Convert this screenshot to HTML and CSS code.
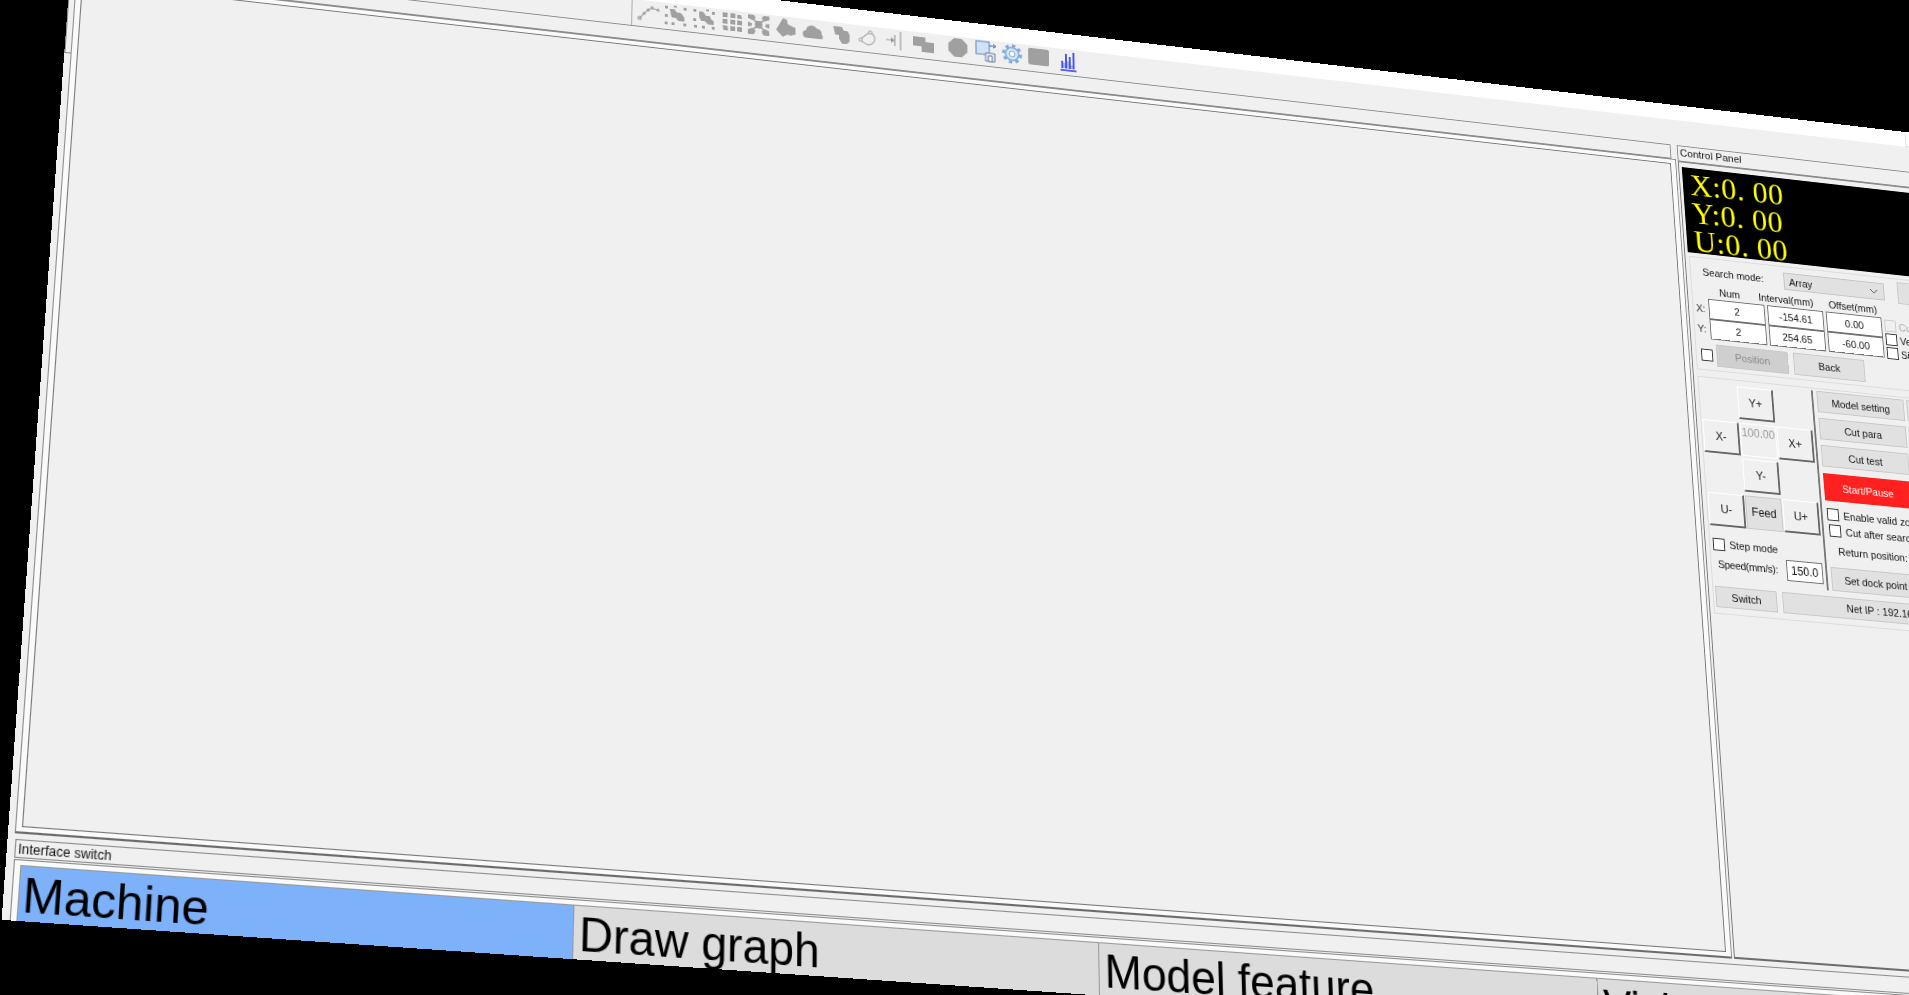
FILE: index.html
```html
<!DOCTYPE html>
<html>
<head>
    <title>Cutter Control</title>
    <meta name="viewport" content="width=device-width, initial-scale=1.0">
    <link rel="stylesheet" href="styles.css">
</head>
<body>
<div class="app">
    <div class="titlebar"><span class="win-btn"></span></div>

    <div class="toolbar">
        <div class="tools">
            <svg class="ico" viewBox="0 0 24 24"><path d="M3 20L9 13Q14 6 22 9" fill="none" stroke="#aaa" stroke-width="1.2"/><path d="M2 18h3v3H2zM7 13h2v2H7zM11 9h2v2h-2zM15 6h2v2h-2zM21 8h2v2h-2z" fill="none" stroke="#999"/></svg>
            <svg class="ico" viewBox="0 0 24 24"><path d="M6 6h5l2 3h4l2 2 2 3v4h-6l-3-3H8L7 11z" fill="#a0a0a0"/><path d="M1 3h3v3H1zM10 2h3v2h-3zM20 3h3v3h-3zM1 12h3v3H1zM1 20h3v3H1zM8 20h3v3H8zM20 20h3v3h-3z" fill="#a0a0a0"/></svg>
            <svg class="ico" viewBox="0 0 24 24"><path d="M7 5h4l3 4h4l1 3 3 2v4h-6l-3-3H9L7 11z" fill="#a0a0a0"/><path d="M1 3h3v3H1zM14 2h3v2h-3zM20 4h3v3h-3zM1 13h3v3H1zM2 20h3v3H2zM10 20h3v3h-3zM20 20h3v3h-3z" fill="#a0a0a0"/></svg>
            <svg class="ico" viewBox="0 0 24 24"><path d="M3 3h5v5H3zM11 3h5v5h-5zM18 4h4l1 4h-5zM3 10h5v5H3zM11 10h5v5h-5zM18 10h5v5h-5zM3 17h5l1 5H4zM11 17h5v5h-5zM18 17h5v5h-5z" fill="#a0a0a0"/></svg>
            <svg class="ico" viewBox="0 0 24 24"><path d="M1 2h6l2 3-3 3-5-2zM17 2h6v4l-5 2-3-3zM1 18l5-2 3 3-2 4H1zM15 19l3-3 5 2v5h-6zM9 8h6l1 4-1 4H9l-1-4zM1 10l4 1v3l-4 1zM23 10l-4 1v3l4 1z" fill="#a0a0a0"/><path d="M5 5l14 14M19 5L5 19" stroke="#a0a0a0" stroke-width="1.6"/></svg>
            <svg class="ico" viewBox="0 0 24 24"><path d="M9 2l4 1 1 5 8 3v7l-5 2-3-1-5 3-7-7z" fill="#a0a0a0"/></svg>
            <svg class="ico" viewBox="0 0 24 24"><path d="M5 20a4 4 0 0 1-1-8 6 6 0 0 1 11-3 5 5 0 0 1 5 6 3 3 0 0 1 0 5z" fill="#a0a0a0"/></svg>
            <svg class="ico" viewBox="0 0 24 24"><path d="M4 4h9l2 4h4l2 4v7l-3 3h-5l-3-5v-4H6z" fill="#a0a0a0"/></svg>
            <svg class="ico" viewBox="0 0 24 24"><path d="M4 15L14 6Q20 9 19 15Q15 22 9 19Q6 18 4 15z" fill="none" stroke="#aaa" stroke-width="1.2"/><path d="M3 14h3v3H3zM13 5h3v3h-3z" fill="#f0f0f0" stroke="#999" stroke-width=".8"/></svg>
            <svg class="ico" viewBox="0 0 24 24"><path d="M17 2v20" stroke="#999" stroke-width="1.2"/><path d="M11 6v12" stroke="#999" stroke-width="1.2"/><path d="M2 12h6" stroke="#999"/><path d="M7 9l4 3-4 3z" fill="#999"/></svg>
            <svg class="ico gap-s" viewBox="0 0 24 24"><path d="M1 5h13v5h9v11H10v-6H1z" fill="#a0a0a0"/></svg>
            <svg class="ico gap-b" viewBox="0 0 24 24"><path d="M8 2h8l6 6v8l-6 6H8l-6-6V8z" fill="#a0a0a0"/></svg>
            <svg class="ico" viewBox="0 0 24 24"><rect x="2" y="2" width="14" height="14" fill="#cfe2f7" stroke="#5f82b8"/><path d="M16 6h6M20 4l3 2-3 2" fill="none" stroke="#3f62a8"/><path d="M12 14h10v9H12z" fill="#dfe8f4" stroke="#6f7fa0"/><path d="M15 17h4v6h-4z" fill="#fff" stroke="#5f6f95"/></svg>
            <svg class="ico" viewBox="0 0 24 24"><circle cx="12" cy="12" r="7" fill="#d2e4f6" stroke="#7aa8d8" stroke-width="1.6"/><circle cx="12" cy="12" r="9" fill="none" stroke="#7aa8d8" stroke-width="3" stroke-dasharray="3.5 3.5"/><circle cx="12" cy="12" r="3" fill="#fff" stroke="#7aa8d8"/></svg>
            <svg class="ico" viewBox="0 0 24 24"><rect x="1" y="3" width="22" height="18" rx="2" fill="#a0a0a0"/></svg>
            <svg class="ico gap-a" viewBox="0 0 24 24"><path d="M4 23h17M6 21V13M10 21V5M14 21V8M18 21V3" fill="none" stroke="#1a2cf0" stroke-width="1.6"/><path d="M8 21v-6M12 21v-8M16 21v-4" stroke="#6a78f5"/></svg>
        </div>
    </div>

    <div class="workspace">
        <div class="edge-stub"></div>
        <div class="view-col">
            <div class="caption view-caption"></div>
            <div class="frame view-frame">
                <div class="canvas"></div>
            </div>
        </div>

        <div class="panel-col">
            <div class="caption panel-caption">Control Panel</div>
            <div class="frame panel-frame">
                <div class="led">X:0. 00<br>Y:0. 00<br>U:0. 00</div>

                <div class="group search">
                    <div class="search-top">
                        <span class="search-label">Search mode:</span>
                        <div class="select">Array
                            <svg class="chev" viewBox="0 0 10 6"><path d="M1 1l4 4 4-4" fill="none" stroke="#555"/></svg>
                        </div>
                        <button class="btn search-btn"></button>
                    </div>
                    <div class="search-mid">
                        <div class="coord">
                            <span></span><span class="head head-num">Num</span><span class="head head-int">Interval(mm)</span><span class="head head-off">Offset(mm)</span>
                            <span class="axis">X:</span><input class="cell" value="2"><input class="cell" value="-154.61"><input class="cell" value="0.00">
                            <span class="axis">Y:</span><input class="cell" value="2"><input class="cell" value="254.65"><input class="cell" value="-60.00">
                        </div>
                        <div class="side-checks">
                            <label class="check off"><input type="checkbox" class="chk" disabled>Cut</label>
                            <label class="check"><input type="checkbox" class="chk">Vertical</label>
                            <label class="check"><input type="checkbox" class="chk">Single</label>
                        </div>
                    </div>
                    <div class="search-bottom">
                        <input type="checkbox" class="chk">
                        <button class="btn pos-btn" disabled>Position</button>
                        <button class="btn back-btn">Back</button>
                    </div>
                </div>

                <div class="group manual">
                    <div class="manual-row">
                        <div class="jog-col">
                            <div class="dpad">
                                <span></span><button class="jog">Y+</button><span></span>
                                <button class="jog">X-</button><div class="jog-step">100.00</div><button class="jog">X+</button>
                                <span></span><button class="jog">Y-</button><span></span>
                                <button class="jog">U-</button><button class="btn feed">Feed</button><button class="jog">U+</button>
                            </div>
                            <label class="check step"><input type="checkbox" class="chk">Step mode</label>
                            <div class="speed"><span class="speed-label">Speed(mm/s):</span><input class="cell speed-input" value="150.0"></div>
                        </div>
                        <div class="divider"></div>
                        <div class="action-col">
                            <div class="action-row"><button class="btn act">Model setting</button><button class="btn act"></button></div>
                            <div class="action-row"><button class="btn act">Cut para</button><button class="btn act"></button></div>
                            <div class="action-row"><button class="btn act">Cut test</button><button class="btn act"></button></div>
                            <button class="start">Start/Pause</button>
                            <label class="check valid"><input type="checkbox" class="chk">Enable valid zone</label>
                            <label class="check after"><input type="checkbox" class="chk">Cut after search</label>
                            <div class="return">Return position:</div>
                            <button class="btn dock">Set dock point</button>
                        </div>
                    </div>
                    <div class="status-row">
                        <button class="btn switch">Switch</button>
                        <button class="btn net">Net IP : 192.168.1.100</button>
                    </div>
                </div>
            </div>
        </div>
    </div>

    <div class="switcher">
        <div class="caption switch-caption">Interface switch</div>
        <div class="switch-frame">
            <button class="page active">Machine</button>
            <button class="page">Draw graph</button>
            <button class="page">Model feature</button>
            <button class="page">Vision</button>
        </div>
    </div>
</div>
</body>
</html>
```
FILE: styles.css
```css
html, body {
    margin: 0;
    height: 100%;
    background: #000;
    overflow: hidden;
}
/* the whole window is photographed at an angle */
.app {
    width: 2030px;
    height: 971px;
    display: flex;
    flex-direction: column;
    overflow: hidden;
    background: #f0f0f0;
    color: #111;
    font-family: "Liberation Sans", Arial, sans-serif;
    font-size: 11px;
    transform-origin: 0 0;
    transform: matrix3d(1.04562, 0.11782, 0, 0.000049818,
                        -0.07505, 0.95857, 0, -0.000085585,
                        0, 0, 1, 0,
                        82, -18, 0, 1) translate(-12px, -66px);
}
.titlebar {
    height: 17px;
    flex: none;
    background: #fff;
    padding-left: 1935px;
}
.win-btn {
    display: block;
    width: 34px;
    height: 15px;
    margin-top: 1px;
    border-left: 1px solid #ddd;
    border-bottom: 1px solid #ddd;
}
.toolbar {
    height: 28px;
    flex: none;
    padding-left: 553px;
}
.tools {
    height: 28px;
    box-sizing: border-box;
    border-left: 1px solid #aaa;
    padding: 0 0 4px 4px;
    display: flex;
    align-items: center;
    gap: 4.3px;
}
.ico {
    width: 24px;
    height: 24px;
    flex: none;
}
.gap-s { margin-left: 1px; }
.gap-a { margin-left: 3px; }
.gap-b { margin-left: 8px; }

.workspace {
    height: 848px;
    flex: none;
    display: flex;
}
.edge-stub {
    width: 6px;
    height: 96px;
    flex: none;
    box-sizing: border-box;
    border-left: 1px solid #888;
    border-bottom: 1px solid #888;
}
.caption {
    box-sizing: border-box;
    border: 1px solid #8c8c8c;
    padding: 1px 2px;
    font-size: 12px;
    white-space: nowrap;
}
.view-col {
    width: 1663px;
    display: flex;
    flex-direction: column;
    flex: none;
}
.view-caption {
    height: 16px;
    margin-right: 5px;
}
.frame {
    flex: 1;
    box-sizing: border-box;
    border: 1px solid #8c8c8c;
    border-bottom: 2px solid #6c6c6c;
    background: #fafafa;
}
.view-frame {
    padding: 4px 5px 4px 5px;
    display: flex;
}
.canvas {
    flex: 1;
    background: #f0f0f0;
    border: 1px solid #777;
}
.panel-col {
    width: 358px;
    margin-left: 2px;
    display: flex;
    flex-direction: column;
    flex: none;
}
.panel-caption {
    height: 18px;
    font-size: 11.5px;
}
.panel-frame {
    background: #f0f0f0;
    padding: 5px 2px 0 3px;
    border-left-color: #777;
}

.led {
    height: 94px;
    box-sizing: border-box;
    padding: 3px 0 0 8px;
    background: #000;
    color: #ff0;
    font-family: "Liberation Serif", serif;
    font-size: 34px;
    line-height: 31px;
    letter-spacing: .5px;
}
.group {
    border: 1px solid #dcdcdc;
    margin-left: 1px;
}
.search {
    margin-top: 4px;
    padding: 3px 0 4px;
}
.search-top {
    display: flex;
    align-items: center;
    padding-left: 13px;
}
.search-label { width: 91px; }
.select {
    position: relative;
    width: 114px;
    height: 19px;
    box-sizing: border-box;
    padding: 3px 0 0 5px;
    background: #e1e1e1;
    border: 1px solid #c4c4c4;
}
.chev {
    position: absolute;
    right: 6px;
    top: 6px;
    width: 10px;
    height: 6px;
}
.search-btn {
    width: 110px;
    height: 24px;
    margin-left: 15px;
}
.search-mid {
    display: flex;
    margin-top: 1px;
    padding-left: 3px;
}
.coord {
    display: grid;
    grid-template-columns: 11px 63px 63px 63px;
    grid-template-rows: 16px 22px 22px;
    column-gap: 3px;
    align-items: center;
}
.head { white-space: nowrap; }
.head-num { margin-left: 13px; }
.head-int { margin-left: -9px; }
.head-off { margin-left: 4px; }
.axis { color: #333; }
.cell {
    width: 100%;
    height: 22px;
    box-sizing: border-box;
    border: 1px solid #707070;
    background: #fff;
    padding: 0;
    text-align: center;
    font: inherit;
    color: #111;
}
.side-checks {
    display: flex;
    flex-direction: column;
    gap: 2px;
    padding: 18px 0 0 3px;
}
.check {
    display: flex;
    align-items: center;
    gap: 3px;
    white-space: nowrap;
}
.check.off { color: #aaa; }
.chk {
    appearance: none;
    width: 13px;
    height: 13px;
    margin: 0;
    flex: none;
    background: #fff;
    border: 1px solid #333;
}
.chk:disabled {
    background: #f0f0f0;
    border-color: #ccc;
}
.search-bottom {
    display: flex;
    align-items: center;
    margin-top: 4px;
    padding-left: 5px;
}
.btn {
    box-sizing: border-box;
    padding: 0;
    background: #e1e1e1;
    border: 1px solid #c8c8c8;
    font: inherit;
    color: #111;
}
.btn:disabled {
    background: #cfcfcf;
    color: #8a8a8a;
}
.pos-btn {
    width: 80px;
    height: 24px;
    margin-left: 4px;
}
.back-btn {
    width: 80px;
    height: 24px;
    margin-left: 6px;
}

.manual {
    margin-top: 7px;
    padding: 2px 0 6px;
}
.manual-row {
    display: flex;
    height: 212px;
}
.jog-col {
    width: 124px;
    margin-left: 1px;
    padding-top: 4px;
    flex: none;
}
.dpad {
    display: grid;
    grid-template-columns: repeat(3, 40px);
    grid-auto-rows: 35px;
    gap: 3.5px 1px;
}
.jog {
    padding: 0;
    background: #f0f0f0;
    border: 1px solid;
    border-color: #fff #666 #666 #fff;
    border-width: 1px 2px 2px 1px;
    font: inherit;
    font-size: 12px;
    color: #222;
}
.jog-step {
    text-align: center;
    color: #999;
    font-size: 12px;
    padding-top: 2px;
    border: 1px solid #fff;
}
.feed { font-size: 12px; }
.step {
    margin: 13px 0 0 2px;
    gap: 5px;
}
.speed {
    display: flex;
    align-items: center;
    justify-content: space-between;
    margin: 3px 3px 0 6px;
}
.speed-label { letter-spacing: -.3px; }
.speed-input {
    width: 40px;
    font-size: 12px;
}
.divider {
    width: 2px;
    background: #777;
    flex: none;
}
.action-col {
    margin-left: 4px;
    flex: 1;
    min-width: 0;
}
.action-row {
    display: flex;
    gap: 3px;
    margin-bottom: 6px;
}
.act {
    width: 98px;
    height: 23px;
}
.start {
    display: block;
    width: 98px;
    height: 29px;
    margin-top: 7px;
    padding: 0;
    border: 0;
    background: #ff2020;
    color: #fff;
    font: inherit;
}
.valid { margin: 8px 0 0 1px; gap: 5px; }
.after { margin: 4px 0 0 2px; gap: 5px; }
.return { margin: 9px 0 0 10px; height: 14px; }
.dock {
    display: block;
    width: 98px;
    height: 25px;
    margin: 9px 0 0 0;
}
.status-row {
    display: flex;
    margin-top: 6px;
    padding-left: 2px;
}
.switch {
    width: 67px;
    height: 22px;
}
.net {
    width: 250px;
    height: 22px;
    margin-left: 6px;
}

.switcher {
    margin-top: 5px;
    padding-left: 7px;
}
.switch-caption { height: 17px; }
.switch-frame {
    display: flex;
    box-sizing: border-box;
    height: 80px;
    padding: 4px 0 0 5px;
    background: #fafafa;
    border: 1px solid #8c8c8c;
    margin-top: 1px;
}
.page {
    width: 504px;
    flex: none;
    box-sizing: border-box;
    padding: 1px 0 0 5px;
    display: flex;
    background: #dcdcdc;
    border: 0;
    border-left: 1px solid #999;
    border-top: 1px solid #999;
    font-family: "Liberation Sans", Arial, sans-serif;
    font-size: 44px;
    color: #000;
}
.page.active { background: #7db1fa; padding-left: 3px; }
```
